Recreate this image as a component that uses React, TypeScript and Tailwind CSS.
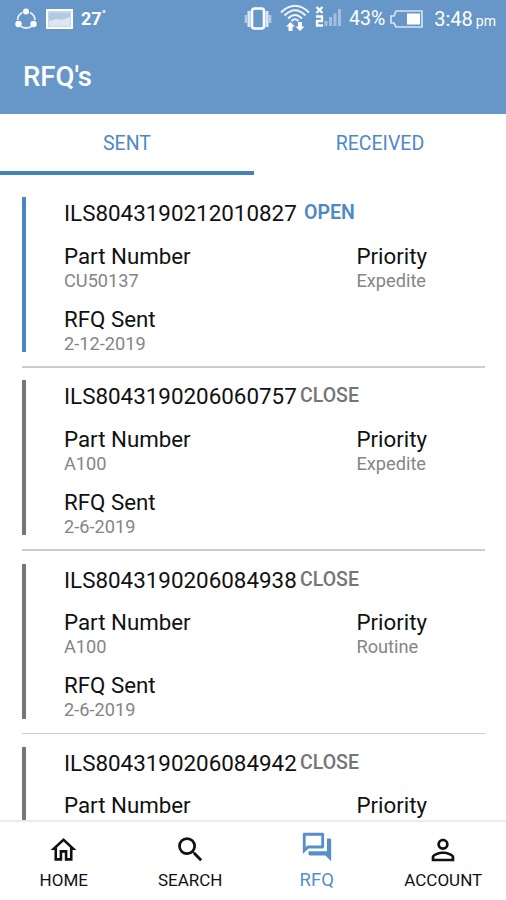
import type { ReactNode } from "react";

type Rfq = { id: string; open?: boolean; part: string; priority: string; sent?: string };

const rfqs: Rfq[] = [
  { id: "ILS8043190212010827", open: true, part: "CU50137", priority: "Expedite", sent: "2-12-2019" },
  { id: "ILS8043190206060757", part: "A100", priority: "Expedite", sent: "2-6-2019" },
  { id: "ILS8043190206084938", part: "A100", priority: "Routine", sent: "2-6-2019" },
  { id: "ILS8043190206084942", part: "", priority: "" },
];

function StatusBar() {
  return (
    <div className="flex h-[38px] items-center pl-[15px] pr-[10px] text-white">
      <svg width="23" height="22" viewBox="0 0 23 22" fill="none" stroke="#e6eef8" strokeWidth="1.8">
        <path d="M7.5 4.5A9 9 0 0 0 2.5 12M15 4.5A9 9 0 0 1 20 12M6 18.5Q11 21.500 16.500 18.500" />
        <g fill="#fff" stroke="none">
          <circle cx="11" cy="3.500" r="3" />
          <circle cx="3.500" cy="16" r="3.200" />
          <circle cx="18.500" cy="16" r="3.200" />
        </g>
      </svg>
      <svg className="ml-[8px]" width="27" height="20" viewBox="0 0 27 20">
        <rect x="1" y="1" width="25" height="18" fill="#c6d7eb" stroke="#fff" strokeWidth="2" />
        <path d="M3 4h21v5L13 11 3 13z" fill="#b3cae4" />
        <path d="M3 12l8-2 5 1 8-3v9H3z" fill="#dce7f3" />
      </svg>
      <span className="ml-[8px] text-[18px] font-bold leading-6">27<span className="align-top text-[11px] leading-4">°</span></span>
      <svg className="ml-auto -mt-px" width="28" height="24" viewBox="0 0 28 24">
        <rect x="8" y="1.500" width="12" height="20" rx="2.500" fill="none" stroke="#fff" strokeWidth="2.600" />
        <path d="M5 4v16M23 4v16" stroke="#dce8f5" strokeWidth="3" />
        <path d="M2 8v8M26 8v8" stroke="#b5cce7" strokeWidth="2.600" />
      </svg>
      <svg className="-mt-[4px] ml-[7px]" width="32" height="29" viewBox="0 0 32 29" fill="none" stroke="#eef4fb" strokeWidth="2.100">
        <path d="M2 9.500Q16-4 30 9.500M5.500 12.500Q16 2 26.500 12.500M9 15.500Q16 8.500 23 15.500M12.500 18Q16 14.500 19.500 18" />
        <path d="M7 23.500l4.500-4.500 4.500 4.500h-2.500v4.500h-4v-4.500zM16.500 23.500l4.500 4.500 4.500-4.500h-2.500V19h-4v4.500z" fill="#fff" stroke="none" />
      </svg>
      <svg className="-mt-[6px] ml-[4px]" width="27" height="24" viewBox="0 0 27 24">
        <path d="M1.500 3l6 6M7.500 3l-6 6" stroke="#fff" strokeWidth="2.200" />
        <path d="M1 12.500h6v4.500H2v4.500h6" fill="none" stroke="#fff" strokeWidth="2.300" />
        <path d="M9.500 22v-5h3v5zM14 22v-9h3v9zM18.500 22V9.500h3V22zM23 22V5h3v17z" fill="#a4c0e0" />
      </svg>
      <span className="ml-[7px] text-[19.5px] leading-6">43%</span>
      <svg className="ml-[5px] -mt-px" width="33" height="18" viewBox="0 0 33 18">
        <path d="M6 1h26v16H6l-2-4H1V6h3z" fill="none" stroke="#d5e3f2" strokeWidth="1.700" />
        <rect x="17" y="3.500" width="13" height="11" fill="#fff" />
      </svg>
      <span className="ml-[11px] text-[20px] leading-6">3:48</span>
      <span className="ml-[3px] mt-[3px] text-[14px] leading-6">pm</span>
    </div>
  );
}

function Field({ label, value }: { label: string; value: string }) {
  return (
    <div>
      <div className="text-[22.3px] leading-[27px] text-[#111]">{label}</div>
      {value && <div className="text-[18.2px] leading-[22px] text-[#858585]">{value}</div>}
    </div>
  );
}

function RfqItem({ rfq }: { rfq: Rfq }) {
  return (
    <article className="flex h-[183.3px] shrink-0 flex-col">
      <div className="flex h-[155px] shrink-0">
        <div className={rfq.open ? "w-1 bg-[#4c86c0]" : "w-1 bg-[#777]"} />
        <div className="ml-[38px] flex-1">
          <div className="flex h-8 items-start">
            <span className="w-[236px] whitespace-nowrap text-[22.4px] leading-[33px] text-[#111]">{rfq.id}</span>
            <span className={rfq.open ? "ml-1 text-[19.5px] font-semibold leading-[31px] text-[#4e89c5]" : "text-[19.5px] font-medium leading-[31px] text-[#757575]"}>
              {rfq.open ? "OPEN" : "CLOSE"}
            </span>
          </div>
          <div className="mt-[13.5px] flex">
            <div className="w-[292.5px]"><Field label="Part Number" value={rfq.part} /></div>
            <Field label="Priority" value={rfq.priority} />
          </div>
          {rfq.sent && <div className="mt-[14px]"><Field label="RFQ Sent" value={rfq.sent} /></div>}
        </div>
      </div>
      <div className="mt-[14px] h-[1.5px] bg-[#cdcdcd]" />
    </article>
  );
}

function NavItem({ label, active, children }: { label: string; active?: boolean; children: ReactNode }) {
  return (
    <div className={active ? "flex w-[126.5px] flex-col items-center pl-px text-[#568fc9]" : "flex w-[126.5px] flex-col items-center pl-px text-[#111]"}>
      <div className={active ? "mt-[8px] flex h-[34px] items-center" : "mt-[11px] flex h-[33px] items-center"}>{children}</div>
      <span className={active ? "text-[18.5px] leading-[32px]" : "text-[17px] leading-[29px]"}>{label}</span>
    </div>
  );
}

export default function App() {
  return (
    <div className="flex h-[900px] w-[506px] flex-col overflow-hidden bg-white font-['Roboto',sans-serif]">
      <header className="h-[114px] shrink-0 bg-[#6797c8]">
        <StatusBar />
        <h1 className="pl-[23px] pt-[21px] text-[27.5px] font-medium leading-9 text-white">RFQ's</h1>
      </header>
      <div className="flex h-[61px] shrink-0 text-[19.5px] text-[#4e89c5]">
        <div className="flex w-[254px] justify-center border-b-4 border-[#4581bd] pt-[15px] leading-[30px]">SENT</div>
        <div className="flex flex-1 justify-center pt-[15px] leading-[30px]">RECEIVED</div>
      </div>
      <main className="flex min-h-0 flex-1 flex-col overflow-hidden pl-[22px] pr-[21px] pt-[22px]">
        {rfqs.map((rfq) => <RfqItem key={rfq.id} rfq={rfq} />)}
      </main>
      <nav className="flex h-[80px] shrink-0 border-t-2 border-[#ececec] bg-white">
        <NavItem label="HOME">
          <svg width="31" height="32" viewBox="0 0 24 24" preserveAspectRatio="none" fill="currentColor"><path d="M12 5.690l5 4.500V18h-2v-6H9v6H7v-7.810l5-4.500M12 3L2 12h3v8h6v-6h2v6h6v-8h3L12 3z" /></svg>
        </NavItem>
        <NavItem label="SEARCH">
          <svg width="33" height="33" viewBox="0 0 24 24" fill="currentColor"><path d="M15.500 14h-.79l-.28-.27A6.471 6.471 0 0 0 16 9.500 6.500 6.500 0 1 0 9.500 16c1.610 0 3.090-.59 4.230-1.570l.27.28v.79l5 4.990L20.490 19l-4.990-5zm-6 0C7.010 14 5 11.990 5 9.500S7.010 5 9.500 5 14 7.010 14 9.500 11.990 14 9.500 14z" /></svg>
        </NavItem>
        <NavItem label="RFQ" active>
          <svg width="34" height="34" viewBox="0 0 24 24" fill="currentColor"><path d="M15 4v7H5.170L4 12.170V4h11m1-2H3c-.55 0-1 .45-1 1v14l4-4h10c.55 0 1-.45 1-1V3c0-.55-.45-1-1-1zm5 4h-2v9H6v2c0 .55.45 1 1 1h11l4 4V7c0-.55-.45-1-1-1z" /></svg>
        </NavItem>
        <NavItem label="ACCOUNT">
          <svg width="34" height="34" viewBox="0 0 24 24" fill="currentColor"><path d="M12 5.900a2.100 2.100 0 1 1 0 4.200 2.100 2.100 0 0 1 0-4.200m0 9c2.970 0 6.100 1.460 6.100 2.100v1.100H5.900V17c0-.64 3.130-2.100 6.100-2.100M12 4C9.790 4 8 5.790 8 8s1.790 4 4 4 4-1.790 4-4-1.790-4-4-4zm0 9c-2.670 0-8 1.340-8 4v3h16v-3c0-2.660-5.330-4-8-4z" /></svg>
        </NavItem>
      </nav>
    </div>
  );
}
